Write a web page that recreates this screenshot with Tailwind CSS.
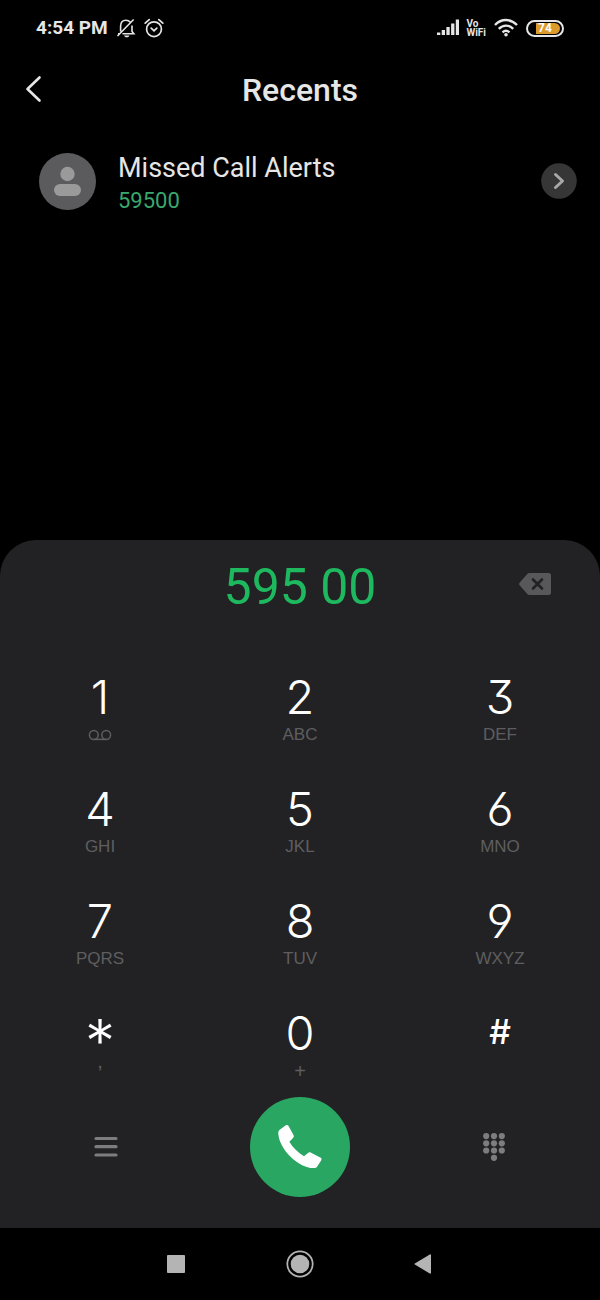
<!DOCTYPE html>
<html lang="en">
<head>
  <meta charset="UTF-8" />
  <meta name="viewport" content="width=device-width, initial-scale=1.0"/>
  <title>Recents</title>
  <script src="https://cdn.jsdelivr.net/npm/@tailwindcss/browser@4"></script>
  <style>
    body { font-family: Roboto, 'Liberation Sans', sans-serif; }
    /* open 6/9 and flat-top 3 for the keypad digits */
    .digit { font-family: Inter, Roboto, sans-serif; font-weight: 350; font-feature-settings: "cv03", "cv04", "cv09"; }
    .letters { font-family: 'Liberation Sans', Arial, sans-serif; }
  </style>
</head>
<body class="bg-black text-[#e6e6e6] min-h-screen flex flex-col">

  <!-- Status bar -->
  <div class="h-14 px-9 flex items-center justify-between">
    <div class="flex items-center gap-2">
      <span class="text-[19px] font-bold leading-6">4:54 PM</span>
      <svg class="w-5 h-5" viewBox="0 0 20 20" fill="none" stroke="#e6e6e6" stroke-width="1.6">
        <path d="M4.6 13.5V8.2C4.6 4.6 6.6 2.2 10 2.2c1.8 0 3.2.7 4.2 1.8M16 7.5v6l1.8 2.3H6.5M2 15.8h1.5M1.5 18 17.6 1.5"/>
        <path d="M8 17.5h5.5c-.6 1.3-1.4 1.8-2.7 1.8s-2.2-.5-2.8-1.8z" fill="#e6e6e6" stroke="none"/>
      </svg>
      <svg class="w-5 h-5" viewBox="0 0 20 20" fill="none" stroke="#e6e6e6" stroke-width="1.7" stroke-linecap="round">
        <circle cx="10" cy="11.2" r="7.4"/>
        <path d="M1.2 5.2 5.2 1.6M18.8 5.2 14.8 1.6M7.2 10.2 10 12.8l2.8-2.6"/>
      </svg>
    </div>
    <div class="flex items-center">
      <svg class="w-6 h-5" viewBox="0 0 24 20" fill="#e6e6e6">
        <path d="M1 14.5h3.3V17H1zM5.7 12H9v5H5.7zM10.4 9h3.3v8h-3.3zM15.1 5.500h3.3V17h-3.3zM19.8 1.500H23V17h-3.2z"/>
      </svg>
      <div class="ml-[6px] text-[10px] leading-[9px] font-bold">Vo<br>WiFi</div>
      <svg class="ml-2 w-6 h-5" viewBox="0 0 24 20" fill="none" stroke="#e6e6e6" stroke-width="2.4">
        <path d="M1 7C7.2.4 16.8.4 23 7M4.8 10.8c4.2-4.3 10.2-4.3 14.4 0M8.5 14.3c2.2-2 4.8-2 7 0"/>
        <circle cx="12" cy="16.8" r="1.8" fill="#e6e6e6" stroke="none"/>
      </svg>
      <div class="ml-2 w-[38px] h-[17px] rounded-full border-2 border-[#e6e6e6] p-px flex justify-end">
        <span class="w-6 mr-px rounded-r-full bg-[#dd9a2c] text-white text-[12px] leading-[11px] font-bold pl-[2px]">74</span>
      </div>
    </div>
  </div>

  <!-- Header -->
  <header class="h-[68px] relative flex items-center justify-center">
    <button aria-label="Back" class="absolute left-5 top-[15px] p-1">
      <svg class="w-5 h-7" viewBox="0 0 20 28" fill="none" stroke="#e6e6e6" stroke-width="2.6" stroke-linecap="round" stroke-linejoin="round">
        <path d="M15.5 2.5 3.5 14l12 11.5"/>
      </svg>
    </button>
    <h1 class="text-[32px] leading-10 font-medium">Recents</h1>
  </header>

  <!-- Call list -->
  <main class="flex-1 pt-[22px] pl-[39px] pr-[23px]">
    <div class="flex items-center">
      <svg class="w-[57px] h-[57px]" viewBox="0 0 57 57">
        <circle cx="28.5" cy="28.5" r="28.5" fill="#5b5b5d"/>
        <circle cx="28.5" cy="21" r="7.2" fill="#9a9a9a"/>
        <rect x="15" y="31" width="27" height="12" rx="6" fill="#9a9a9a"/>
      </svg>
      <div class="ml-[22px] flex-1 pt-1">
        <h2 class="text-[27px] leading-9">Missed Call Alerts</h2>
        <p class="text-[22px] leading-[30px] text-[#3aa76d]">59500</p>
      </div>
      <button aria-label="Call details">
        <svg class="w-9 h-9" viewBox="0 0 36 36">
          <circle cx="18" cy="18" r="17.8" fill="#363636"/>
          <path d="M14.5 11.5l7 6.5-7 6.5" fill="none" stroke="#a8a8a8" stroke-width="3" stroke-linecap="round" stroke-linejoin="round"/>
        </svg>
      </button>
    </div>
  </main>

  <!-- Dial pad -->
  <section class="bg-[#222224] rounded-t-[36px] pb-[31px]">
    <div class="h-[93px] relative flex items-center">
      <input type="tel" aria-label="Phone number" value="595 00" class="w-full text-center text-[50px] leading-[60px] text-[#1eb85f] outline-none">
      <button aria-label="Delete" class="absolute right-[45px] top-6 p-1">
        <svg class="w-8 h-8" viewBox="0 0 32 32">
          <path d="M10.5 5h19a2.5 2.5 0 0 1 2.5 2.5v17a2.5 2.5 0 0 1-2.5 2.5h-19a3 3 0 0 1-2-.8L.8 17.4a2 2 0 0 1 0-2.8L8.500 5.800a3 3 0 0 1 2-.8z" fill="#58585a"/>
          <path d="M14 11.500l9 9M23 11.500l-9 9" stroke="#222224" stroke-width="2.6" stroke-linecap="round"/>
        </svg>
      </button>
    </div>

    <div class="mt-10 grid grid-cols-3 gap-y-10 text-white text-[47px] leading-[48px]">
      <button class="h-[72px] flex flex-col items-center gap-1">
        <span class="digit">1</span>
        <svg class="w-6 h-5" viewBox="0 0 24 20" fill="none" stroke="#5e5e60" stroke-width="1.5">
          <circle cx="5.8" cy="10" r="4.4"/><circle cx="18.2" cy="10" r="4.4"/><path d="M5.8 14.4h12.4"/>
        </svg>
      </button>
      <button class="h-[72px] flex flex-col items-center gap-1"><span class="digit">2</span><span class="letters text-[17px] leading-5 text-[#5e5e60]">ABC</span></button>
      <button class="h-[72px] flex flex-col items-center gap-1"><span class="digit">3</span><span class="letters text-[17px] leading-5 text-[#5e5e60]">DEF</span></button>
      <button class="h-[72px] flex flex-col items-center gap-1"><span class="digit">4</span><span class="letters text-[17px] leading-5 text-[#5e5e60]">GHI</span></button>
      <button class="h-[72px] flex flex-col items-center gap-1"><span class="digit">5</span><span class="letters text-[17px] leading-5 text-[#5e5e60]">JKL</span></button>
      <button class="h-[72px] flex flex-col items-center gap-1"><span class="digit">6</span><span class="letters text-[17px] leading-5 text-[#5e5e60]">MNO</span></button>
      <button class="h-[72px] flex flex-col items-center gap-1"><span class="digit">7</span><span class="letters text-[17px] leading-5 text-[#5e5e60]">PQRS</span></button>
      <button class="h-[72px] flex flex-col items-center gap-1"><span class="digit">8</span><span class="letters text-[17px] leading-5 text-[#5e5e60]">TUV</span></button>
      <button class="h-[72px] flex flex-col items-center gap-1"><span class="digit">9</span><span class="letters text-[17px] leading-5 text-[#5e5e60]">WXYZ</span></button>
      <button class="h-[72px] flex flex-col items-center"><span class="digit h-11 text-[60px] leading-[64px]">*</span><span class="letters text-[20px] leading-4 text-[#5e5e60]">,</span></button>
      <button class="h-[72px] flex flex-col items-center gap-1"><span class="digit">0</span><span class="letters text-[20px] leading-5 text-[#5e5e60]">+</span></button>
      <button class="h-[72px] flex flex-col items-center gap-1"><span class="digit text-[34px] leading-[46px]"><b class="font-medium">#</b></span></button>
    </div>

    <div class="mt-4 px-20 flex items-center justify-between">
      <button aria-label="Menu" class="w-[52px] h-[52px] flex items-center justify-center">
        <svg class="w-6 h-6" viewBox="0 0 24 24" stroke="#7d7d7d" stroke-width="3.2" stroke-linecap="round">
          <path d="M2 3.5h20M2 11.700h20M2 20h20"/>
        </svg>
      </button>
      <button aria-label="Call" class="w-[100px] h-[100px] rounded-full bg-[#29a661] flex items-center justify-center">
        <svg class="w-12 h-12" viewBox="0 0 48 48" fill="white">
          <path d="M4 6.500 9.500 2.500c1.200-.8 2.500-.4 3.200.8l4.800 8.800c.6 1.200.4 2-.5 3l-3.600 3.600c3.300 5.600 8.600 11 14.600 14.600l4-3.400c1-.8 1.900-.8 3-.2l9.300 4.700c1.300.7 1.600 1.800.8 3l-3.700 5.800c-.9 1.400-2 1.900-3.600 1.900C23 45.500 3 26.500 2.300 10.500c-.1-1.700.4-3 1.700-4z"/>
        </svg>
      </button>
      <button aria-label="Hide keypad" class="w-[52px] h-[52px] flex items-center justify-center">
        <svg class="w-6 h-7" viewBox="0 0 24 28" fill="#7d7d7d">
          <circle cx="4.2" cy="3.1" r="3.1"/><circle cx="12" cy="3.1" r="3.1"/><circle cx="19.8" cy="3.1" r="3.1"/>
          <circle cx="4.2" cy="10.3" r="3.1"/><circle cx="12" cy="10.3" r="3.1"/><circle cx="19.8" cy="10.3" r="3.1"/>
          <circle cx="4.2" cy="17.5" r="3.1"/><circle cx="12" cy="17.5" r="3.1"/><circle cx="19.8" cy="17.5" r="3.1"/>
          <circle cx="12" cy="24.8" r="3.1"/>
        </svg>
      </button>
    </div>
  </section>

  <!-- System navigation -->
  <nav class="h-[72px] flex items-center justify-center gap-[84px]">
    <button aria-label="Overview" class="w-10 h-10 flex items-center justify-center">
      <svg class="w-5 h-5" viewBox="0 0 20 20"><rect x="1" y="1" width="18" height="18" rx="1" fill="#b4b4b4"/></svg>
    </button>
    <button aria-label="Home" class="w-10 h-10 flex items-center justify-center">
      <svg class="w-7 h-7" viewBox="0 0 28 28"><circle cx="14" cy="14" r="12.7" fill="none" stroke="#b4b4b4" stroke-width="1.8"/><circle cx="14" cy="14" r="9.3" fill="#b4b4b4"/></svg>
    </button>
    <button aria-label="Back" class="w-10 h-10 flex items-center justify-center">
      <svg class="w-5 h-5" viewBox="0 0 20 20"><path d="M.8 9.400 15.800.5c.6-.4 1.200 0 1.200.6v17.800c0 .6-.6 1-1.200.6L.8 10.600c-.5-.3-.5-.9 0-1.200z" fill="#b4b4b4"/></svg>
    </button>
  </nav>
</body>
</html>
